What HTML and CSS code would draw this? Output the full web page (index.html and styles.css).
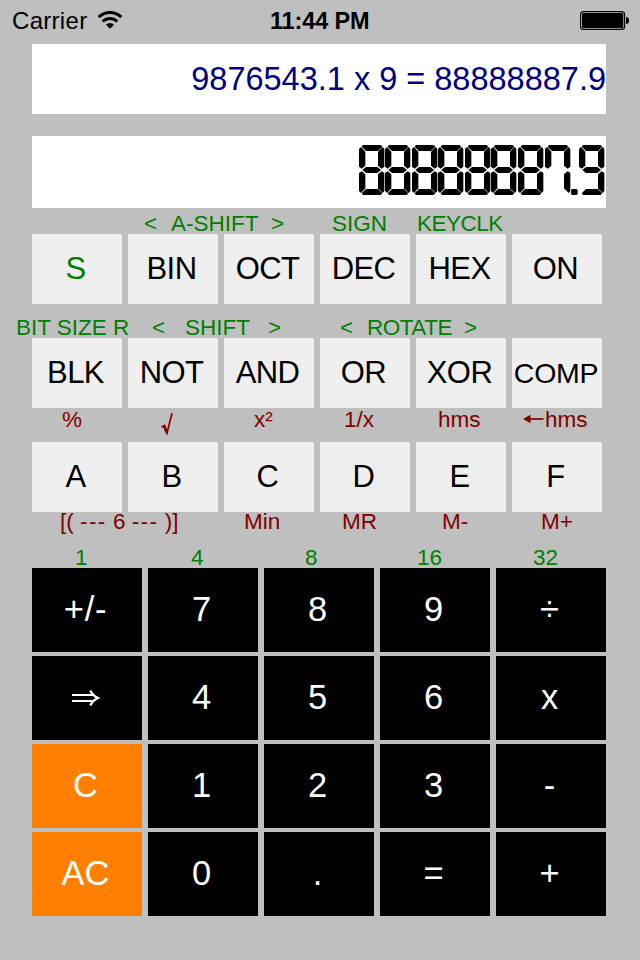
FILE: index.html
```
<!DOCTYPE html>
<html lang="en">
<head>
<meta charset="utf-8">
<title>Calculator</title>
<link rel="stylesheet" href="styles.css">
</head>
<body>
<header class="status">
  <div class="carrier"><span>Carrier</span>
    <svg class="wifi" width="26" height="20" viewBox="0 0 26 20"><g fill="none" stroke="#000" stroke-width="3"><path d="M1.6 7.2Q6.8 2.5 13 2.5T24.4 7.2"/><path d="M5.6 11.4Q9 8.4 13 8.4T20.4 11.4"/></g><path d="M8.8 14.4Q13 11.4 17.2 14.4L13 18.8Z"/></svg>
  </div>
  <time class="clock">11:44 PM</time>
  <svg class="battery" width="50" height="20" viewBox="0 0 50 20"><rect x=".6" y=".6" width="44" height="17.8" rx="3" fill="none" stroke="#000" stroke-width="1.1"/><rect x="2" y="2" width="41.3" height="15" rx="1.5"/><path d="M46 6Q49 6.3 49 9.5T46 13Z"/></svg>
</header>
<main class="calc">
  <div class="display history">9876543.1 x 9 = 88888887.9</div>
  <div class="display result">
    <svg width="248" height="52" viewBox="0 0 744 156" role="img" aria-label="88888887.9">
      <defs>
        <polygon id="a" points="12,0 65,0 70,5 57,18 21,18 8,5"/>
        <polygon id="f" points="6,6 19,20 19,62 8,71 0,65 0,12"/>
        <polygon id="b" points="71,6 57,20 57,62 68,71 76,65 76,12"/>
        <polygon id="g" points="10,75 21,66 55,66 66,75 55,84 21,84"/>
        <polygon id="e" points="8,79 19,88 19,130 6,144 0,138 0,84"/>
        <polygon id="c" points="68,79 57,88 57,130 71,144 76,138 76,84"/>
        <polygon id="d" points="21,132 57,132 70,145 65,150 12,150 8,145"/>
        <g id="eight"><use href="#a"/><use href="#b"/><use href="#c"/><use href="#d"/><use href="#e"/><use href="#f"/><use href="#g"/></g>
        <g id="seven"><use href="#a"/><use href="#b"/><use href="#c"/><use href="#f"/></g>
        <g id="nine"><use href="#a"/><use href="#b"/><use href="#c"/><use href="#d"/><use href="#f"/><use href="#g"/></g>
      </defs>
      <use href="#eight" x="3"/><use href="#eight" x="81"/><use href="#eight" x="162"/><use href="#eight" x="240"/><use href="#eight" x="321"/><use href="#eight" x="399"/><use href="#eight" x="480"/><use href="#seven" x="561"/>
      <rect x="639" y="132" width="20" height="18" rx="5"/>
      <use href="#nine" x="663"/>
    </svg>
  </div>
  <div class="labels row-a"><span>&lt;</span><span>A-SHIFT</span><span>&gt;</span><span>SIGN</span><span class="tight">KEYCLK</span></div>
  <div class="keys"><button class="shift">S</button><button>BIN</button><button>OCT</button><button>DEC</button><button>HEX</button><button>ON</button></div>
  <div class="labels row-b"><span>BIT SIZE R</span><span>&lt;</span><span>SHIFT</span><span>&gt;</span><span>&lt;</span><span class="tight">ROTATE</span><span>&gt;</span></div>
  <div class="keys"><button>BLK</button><button>NOT</button><button>AND</button><button>OR</button><button>XOR</button><button class="comp">COMP</button></div>
  <div class="labels red row-c"><span>%</span><svg class="root" width="16" height="24" viewBox="0 0 16 24"><path d="M1.5 15L4.5 13.5L7 21L12 1.2" fill="none" stroke="currentColor" stroke-width="1.7"/><path d="M4 14L7 21" stroke="currentColor" stroke-width="2.6"/></svg><span>x²</span><span>1/x</span><span>hms</span><span class="arrow"><svg width="21" height="10" viewBox="0 0 21 10"><path d="M0 5L7.5.7V9.3Z" fill="currentColor"/><path d="M6 5H20.5" stroke="currentColor" stroke-width="1.7"/></svg>hms</span></div>
  <div class="keys"><button>A</button><button>B</button><button>C</button><button>D</button><button>E</button><button>F</button></div>
  <div class="labels red row-d"><span class="memory">[( <i>---</i> 6 <i>---</i> )]</span><span>Min</span><span>MR</span><span>M-</span><span>M+</span></div>
  <div class="labels row-e"><span>1</span><span>4</span><span>8</span><span>16</span><span>32</span></div>
  <div class="pad">
    <button class="sign">+/-</button><button>7</button><button>8</button><button>9</button><button>÷</button>
    <button><svg class="implies" width="28" height="18" viewBox="0 0 28 18"><path d="M0 6H22M0 12H22M18.3 1.5Q20 6 26 9Q20 12 18.3 16.5" fill="none" stroke="currentColor" stroke-width="2.2"/></svg></button><button>4</button><button>5</button><button>6</button><button>x</button>
    <button class="clear">C</button><button>1</button><button>2</button><button>3</button><button>-</button>
    <button class="clear">AC</button><button>0</button><button>.</button><button>=</button><button>+</button>
  </div>
</main>
</body>
</html>
```
FILE: styles.css
```
* { box-sizing: border-box; }
body { margin: 0; width: 640px; height: 960px; overflow: hidden; background: #bfbfbf; font-family: "Liberation Sans", sans-serif; color: #000; }
.status { height: 44px; padding: 0 10px 3px 12px; display: grid; grid-template-columns: 1fr 100px 1fr; align-items: center; font-size: 24px; }
.carrier { display: flex; align-items: center; gap: 10px; letter-spacing: .3px; }
.wifi { margin-bottom: 1px; }
.clock { font-weight: bold; font-size: 23.5px; letter-spacing: -.15px; white-space: nowrap; margin: 2px 0 0 -1px; }
.battery { justify-self: end; margin-top: 1px; }
.calc { width: 574px; margin-left: 32px; }
.display { background: #fff; display: flex; justify-content: flex-end; }
.history { height: 70px; line-height: 71px; font-size: 32.5px; color: #000080; }
.result { height: 72px; margin-top: 22px; padding: 9px 0 0; }
.labels { display: grid; color: #008000; font-size: 22.5px; line-height: 20px; white-space: pre; }
.red { color: #800000; }
.tight { letter-spacing: -.5px; }
.row-a { height: 26px; padding: 6px 0 0 112px; grid-template-columns: 27px 100px 61px 85px 1fr; }
.row-b { height: 34px; padding: 14px 0 0; margin-left: -16px; grid-template-columns: 136px 33px 83px 72px 27px 97px 1fr; }
.row-c { height: 34px; padding: 2px 0 0 30px; grid-template-columns: 98px 94px 90px 94px 85px 1fr; }
.root { margin-top: 2px; }
.arrow { display: flex; gap: 1px; }
.arrow svg { margin-top: 4px; }
.row-d { height: 36px; padding-left: 28px; grid-template-columns: 184px 98px 100px 99px 1fr; }
.memory i { font-style: normal; letter-spacing: 1.4px; }
.row-e { height: 20px; padding-left: 43px; grid-template-columns: 116px 114px 112px 116px 1fr; }
.keys { display: grid; grid-template-columns: repeat(6, 90px); gap: 6px; height: 70px; }
button { border: 0; margin: 0; padding: 0 3px 0 0; font-family: inherit; white-space: nowrap; }
.keys button { background: #efefef; color: #000; font-size: 31px; letter-spacing: -.6px; }
.keys .shift { color: #008000; }
.keys .comp { font-size: 28.5px; letter-spacing: -.3px; padding: 0 2px 0 0; }
.pad { display: grid; grid-template-columns: repeat(5, 110px); grid-auto-rows: 84px; gap: 4px 6px; }
.pad button { background: #000; color: #fff; font-size: 34.5px; padding: 0 3px 2px 0; }
.pad .sign { letter-spacing: .7px; }
.pad .clear { background: #ff8000; }
.implies { display: block; margin: 1px auto 0; }
```
